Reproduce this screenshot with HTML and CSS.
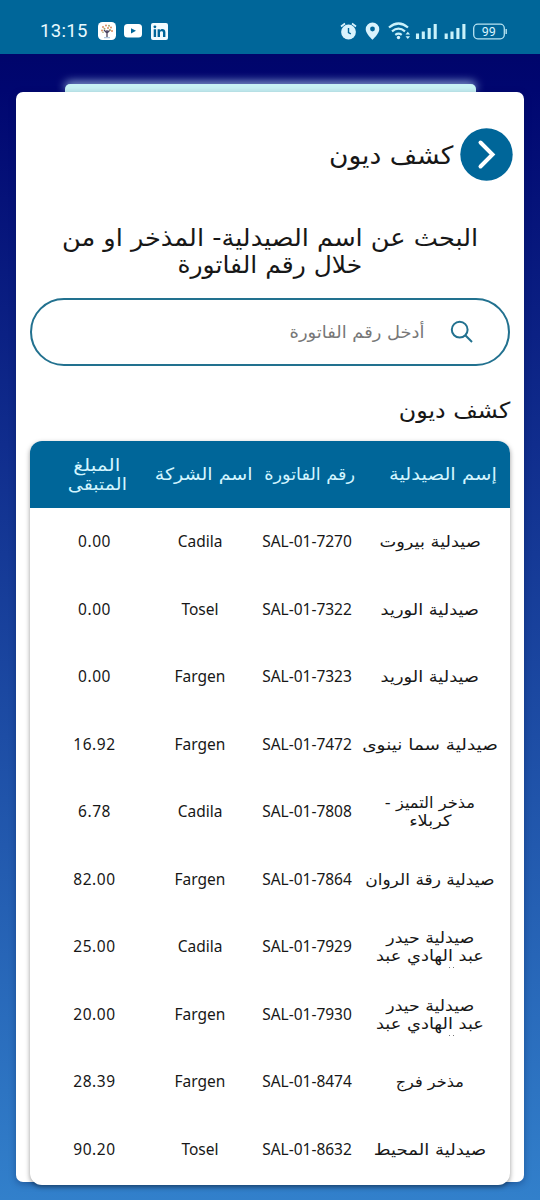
FILE: index.html
```html
<!DOCTYPE html>
<html lang="ar" dir="rtl">
<head>
<meta charset="utf-8">
<title>كشف ديون</title>
<link rel="stylesheet" href="styles.css">
</head>
<body>
<header class="status" dir="ltr">
  <div class="status-left">
    <span class="clock">13:15</span>
    <svg class="app" width="18" height="18" viewBox="0 0 18 18"><rect width="18" height="18" rx="4.5" fill="#fff"/><path d="M9 15V8M9 11L6 8M9 11l3-3" stroke="#49425f" stroke-width="1.3" fill="none"/><g fill="#d88d62"><circle cx="5" cy="5" r="1"/><circle cx="8" cy="3.5" r="1"/><circle cx="13" cy="5.5" r="1"/><circle cx="10" cy="6" r="1"/><circle cx="4" cy="8.5" r="1"/><circle cx="14" cy="9" r="1"/></g><g fill="#a6a56b"><circle cx="11" cy="3.8" r="1"/><circle cx="6.5" cy="6.7" r="1"/><circle cx="12" cy="8" r="1"/><circle cx="5" cy="10.3" r=".8"/></g><path d="M6 15.7h6" stroke="#9bb9d6"/></svg>
    <svg class="tube" width="18" height="14" viewBox="0 0 18 14"><rect width="18" height="13.5" rx="3.5" fill="#fff"/><path d="M7 4.2l5 2.6-5 2.6z" fill="#006699"/></svg>
    <svg class="linked" width="17" height="17" viewBox="0 0 17 17"><rect width="17" height="17" rx="2" fill="#f2fcff"/><g fill="#006699"><circle cx="3.9" cy="3.8" r="1.4"/><path d="M2.7 6.3h2.4v7.8H2.7zM6.6 6.3h2.3v1.1c1.4-2.1 5.5-1.8 5.5 1.9v4.8H12V9.7c0-2-3-1.900-3 0v4.4H6.600z"/></g></svg>
  </div>
  <svg class="status-right" width="172" height="20" viewBox="0 0 172 20" fill="none">
    <g stroke="#d9f3fd"><circle cx="11.500" cy="11" r="7.400" fill="#d9f3fd" stroke="none"/><path d="M4 5.500l4-3M15 2.500l4 3" stroke-width="1.700"/><path d="M11.500 7v4.500l2.300 1.300" stroke="#006699" stroke-width="1.400"/></g>
    <path d="M35.500 1.500a6.800 6.800 0 0 0-6.800 6.800c0 4.600 6.800 10.400 6.800 10.400s6.800-5.800 6.800-10.400a6.800 6.800 0 0 0-6.800-6.800z" fill="#d9f3fd"/><circle cx="35.500" cy="8" r="2.400" fill="#006699"/>
    <g stroke="#c9f2fb" stroke-width="2.200"><path d="M52 6.500q9.500-8 19 0M55 10.400q6.500-5.400 13 0M58.300 13.900q3.200-2.400 6.400 0"/></g><circle cx="61.500" cy="16.500" r="1.700" fill="#d9f3fd"/><path d="M68.500 13.500l2.300-2.700 2.300 2.700zM68.500 15.200l2.300 2.700 2.300-2.700z" fill="#c9f2fb"/>
    <path d="M80.500 12.500v5.500M86.300 10.500v7.500M92.200 7v11M98.200 3v15M109.200 12.500v5.500M115 10.500v7.500M120.900 7v11M126.900 3v15" stroke="#c9f2fb" stroke-width="3.100"/>
    <rect x="136.700" y="3.200" width="30.600" height="14.600" rx="4" stroke="#b8e4f2" stroke-width="1.300"/><path d="M169.200 8v5" stroke="#b8e4f2" stroke-width="1.400"/><text x="151.800" y="14.800" text-anchor="middle" class="battery">99</text>
  </svg>
</header>
<div class="sheet-back"></div>
<main class="sheet">
  <div class="title-row">
    <svg class="back" width="53" height="53" viewBox="0 0 53 53"><circle cx="26.500" cy="26.500" r="26.200" fill="#006699"/><path d="M20.500 14.500L32.500 26.500 20.500 38.500" fill="none" stroke="#fff" stroke-width="4" stroke-linecap="round"/></svg>
    <h1 class="title"><span class="ar from-right w106">كشف ديون</span></h1>
  </div>
  <h2 class="prompt"><span class="ar w107">البحث عن اسم الصيدلية- المذخر او من</span><span class="ar w104">خلال رقم الفاتورة</span></h2>
  <div class="search">
    <svg width="24" height="24" viewBox="0 0 24 24" fill="none" stroke="#22718f" stroke-width="2"><circle cx="9.700" cy="9.700" r="7.900"/><path d="M15.300 15.300l6.700 6.700"/></svg>
    <span class="ar placeholder from-right w105">أدخل رقم الفاتورة</span>
  </div>
  <h3 class="section"><span class="ar from-right w108">كشف ديون</span></h3>
  <section class="table">
    <div class="thead"><div class="h1c"><span class="ar w115">إسم الصيدلية</span></div><div class="h2c"><span class="ar w104">رقم الفاتورة</span></div><div class="h3c"><span class="ar w112">اسم الشركة</span></div><div class="h4c"><span class="ar w119">المبلغ</span><span class="ar w112">المتبقى</span></div></div>
    <div class="row"><div class="name"><span class="ar w115">صيدلية بيروت</span></div><div>SAL-01-7270</div><div>Cadila</div><div class="amount">0.00</div></div>
    <div class="row"><div class="name"><span class="ar w115">صيدلية الوريد</span></div><div>SAL-01-7322</div><div>Tosel</div><div class="amount">0.00</div></div>
    <div class="row"><div class="name"><span class="ar w115">صيدلية الوريد</span></div><div>SAL-01-7323</div><div>Fargen</div><div class="amount">0.00</div></div>
    <div class="row"><div class="name"><span class="ar w119">صيدلية سما نينوى</span></div><div>SAL-01-7472</div><div>Fargen</div><div class="amount">16.92</div></div>
    <div class="row"><div class="name"><span class="ar w105">مذخر التميز -</span><span class="ar w115">كربلاء</span></div><div>SAL-01-7808</div><div>Cadila</div><div class="amount">6.78</div></div>
    <div class="row"><div class="name"><span class="ar w110">صيدلية رقة الروان</span></div><div>SAL-01-7864</div><div>Fargen</div><div class="amount">82.00</div></div>
    <div class="row"><div class="name more"><span class="ar w112">صيدلية حيدر</span><span class="ar w115">عبد الهادي عبد</span></div><div>SAL-01-7929</div><div>Cadila</div><div class="amount">25.00</div></div>
    <div class="row"><div class="name more"><span class="ar w112">صيدلية حيدر</span><span class="ar w115">عبد الهادي عبد</span></div><div>SAL-01-7930</div><div>Fargen</div><div class="amount">20.00</div></div>
    <div class="row"><div class="name"><span class="ar w104">مذخر فرج</span></div><div>SAL-01-8474</div><div>Fargen</div><div class="amount">28.39</div></div>
    <div class="row"><div class="name"><span class="ar w117">صيدلية المحيط</span></div><div>SAL-01-8632</div><div>Tosel</div><div class="amount">90.20</div></div>
  </section>
</main>
</body>
</html>
```
FILE: styles.css
```css
* { box-sizing: border-box; }
body { margin: 0; height: 1200px; overflow: hidden; font-family: "Noto Sans", "DejaVu Sans", sans-serif; color: #171717; background: linear-gradient(#00056b 54px, #000670 90px, #3280cb 1200px); }
h1, h2, h3 { margin: 0; font-weight: 400; }
.status { height: 54px; padding: 21px 31px 0 40px; background: #006699; display: flex; justify-content: space-between; align-items: flex-start; }
.status-left { display: flex; align-items: center; height: 20px; }
.clock { width: 58px; color: #e9faff; font: 400 18.500px/20px Roboto, sans-serif; letter-spacing: .35px; }
.tube { margin-left: 8px; }
.linked { margin-left: 9px; }
.battery { font: 400 12.500px Roboto, sans-serif; fill: #d9f3fd; }
.sheet-back { width: 411px; height: 8px; margin: 30px auto 0; background: #c8f3f5; border-radius: 5px 5px 0 0; box-shadow: 0 -2px 10px rgba(200, 235, 255, .8); }
.sheet { height: 1090px; margin: 0 16px; padding: 36px 14px 0; background: #fff; border-radius: 7px; box-shadow: 0 2px 7px rgba(0, 20, 70, .35); position: relative; }

/* Arabic labels, widened to the wide letterforms of the interface */
.ar { display: inline-block; white-space: nowrap; font-family: "DejaVu Sans", sans-serif; }
.from-right { transform-origin: right; }
.w104 { transform: scaleX(1.04); }
.w105 { transform: scaleX(1.05); }
.w106 { transform: scaleX(1.06); }
.w107 { transform: scaleX(1.067); }
.w108 { transform: scaleX(1.08); }
.w110 { transform: scaleX(1.1); }
.w112 { transform: scaleX(1.12); }
.w115 { transform: scaleX(1.15); }
.w117 { transform: scaleX(1.17); }
.w119 { transform: scaleX(1.19); }

.title-row { display: flex; align-items: center; height: 53px; margin-right: -3px; }
.title { margin-right: 7px; font-size: 25px; line-height: 40px; }
.prompt { margin-top: 44px; height: 54px; display: flex; flex-direction: column; align-items: center; font-size: 24px; line-height: 27px; }
.search { height: 68px; margin-top: 19px; border: 2px solid #22718f; border-radius: 34px; display: flex; align-items: center; padding-right: 34px; }
.placeholder { margin-right: 26px; font-size: 17px; color: #777; }
.section { height: 75px; padding-top: 23px; font-size: 22px; line-height: 40px; }
.table { height: 744px; border-radius: 12px; background: #fff; box-shadow: 0 2px 5px rgba(0, 0, 0, .4); }
.thead { display: flex; align-items: center; height: 67px; padding-right: 10px; border-radius: 12px 12px 0 0; background: #006699; color: #d2f5ff; font-size: 17px; line-height: 19px; }
.thead div { display: flex; flex-direction: column; align-items: center; }
.h1c { width: 114px; }
.h2c { width: 100px; margin-right: 26px; }
.h3c { width: 102px; margin-right: 5px; }
.h4c { width: 64px; margin-right: 24px; }
.row { display: grid; grid-template-columns: 154px 92px 122px 89px; align-items: center; height: 67.500px; padding: 0 3px 1px 0; font-size: 15.500px; line-height: 20px; text-align: center; }
.row div { white-space: nowrap; }
.row .name { display: flex; flex-direction: column; align-items: center; line-height: 18px; position: relative; padding-top: 2px; }
.more::after { content: ""; position: absolute; left: 96px; bottom: -3px; width: 1px; height: 1px; background: #777; box-shadow: 4px 0 #777; }
.amount { letter-spacing: .6px; }
```
